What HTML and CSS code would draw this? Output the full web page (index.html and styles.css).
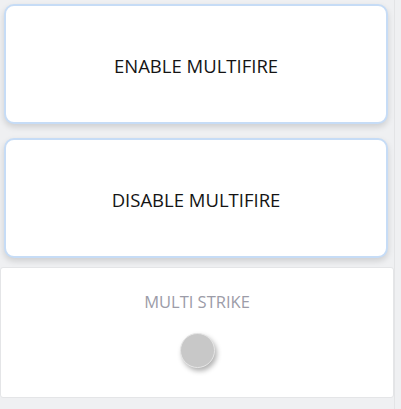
FILE: index.html
```html
<!DOCTYPE html>
<html>
<head>
<meta charset="utf-8">
<link rel="stylesheet" href="styles.css">
</head>
<body>
<div class="panel">
  <div class="cell">
    <button class="action">ENABLE MULTIFIRE</button>
  </div>
  <div class="cell">
    <button class="action">DISABLE MULTIFIRE</button>
  </div>
  <div class="card">
    <div class="label">MULTI STRIKE</div>
    <div class="knob"></div>
  </div>
</div>
</body>
</html>
```
FILE: styles.css
```css
html, body {
  margin: 0;
  padding: 0;
  background: #eff0f2;
  font-family: "Open Sans", "Noto Sans", sans-serif;
}
.panel {
  width: 395px;
  height: 409px;
  box-sizing: border-box;
  border-right: 1px solid #e3e4e6;
  display: flex;
  flex-direction: column;
}
.cell {
  padding: 4px 6px 0 4px;
  height: 134px;
  flex: none;
  box-sizing: border-box;
}
.cell + .cell {
  height: 133px;
}
.action {
  display: block;
  width: 100%;
  height: 120px;
  box-sizing: border-box;
  background: #ffffff;
  border: 2px solid #c6dcf6;
  border-radius: 10px;
  box-shadow: 0 3px 6px rgba(0, 0, 0, 0.14);
  font-family: "Open Sans", "Noto Sans", sans-serif;
  font-size: 18.5px;
  color: #141414;
  padding-top: 3px;
}
.card {
  height: 131px;
  flex: none;
  box-sizing: border-box;
  background: #ffffff;
  border: 1px solid #e4e5e7;
  border-radius: 3px;
  display: flex;
  flex-direction: column;
  align-items: center;
}
.label {
  margin-top: 22px;
  font-size: 16.5px;
  color: #9c9ca8;
}
.knob {
  margin-top: 20px;
  width: 35px;
  height: 35px;
  box-sizing: border-box;
  border-radius: 50%;
  background: #c8c8c8;
  border: 1px solid #e6e6e6;
  box-shadow: 2px 3px 5px rgba(0, 0, 0, 0.3);
}
```
